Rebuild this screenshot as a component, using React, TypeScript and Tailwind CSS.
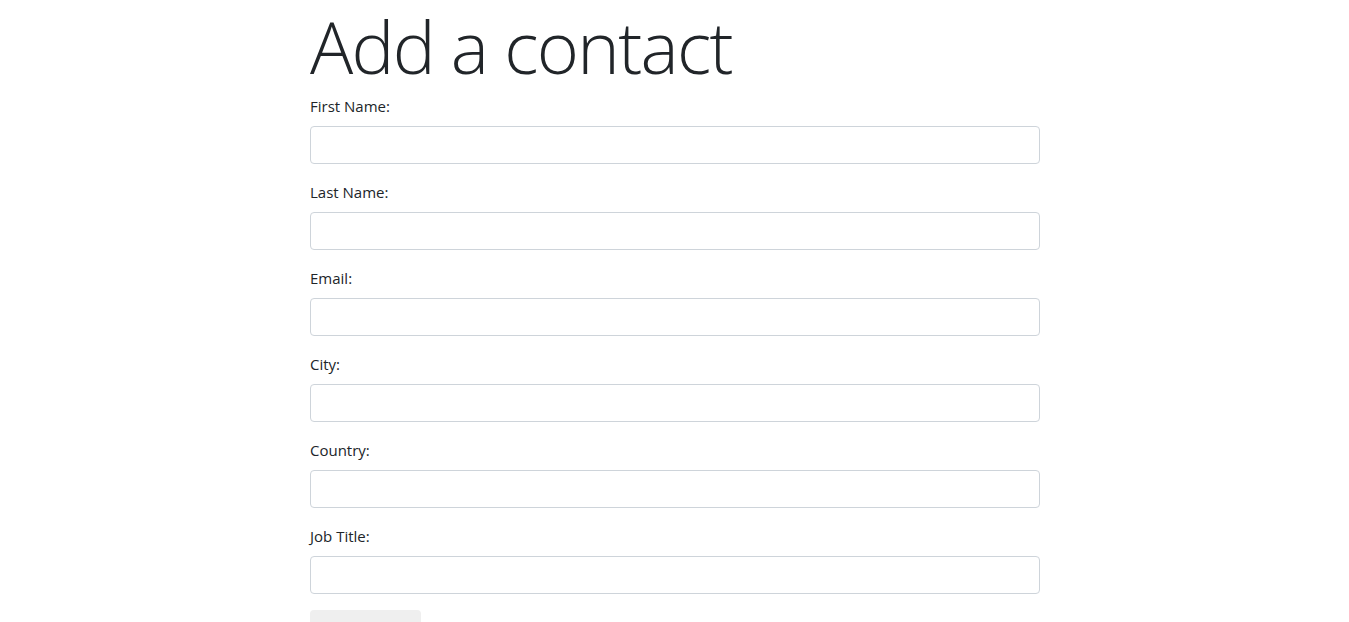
const fields = ["First Name:", "Last Name:", "Email:", "City:", "Country:", "Job Title:"];

export default function App() {
  return (
    <div className="min-h-screen bg-white text-[#212529]">
      <div className="ml-[310px] w-[730px] font-['Open_Sans',sans-serif]">
        <h1 className="text-[72px] leading-[86px] font-light tracking-[-1.7px] pt-[3px] mb-[5px]">Add a contact</h1>
        <form>
          {fields.map((label) => (
            <div key={label} className="mb-4">
              <label className="block text-[15px] leading-6 mb-2">{label}</label>
              <input
                type="text"
                className="block w-full h-[38px] px-3 border border-[#ced4da] rounded bg-white outline-none"
              />
            </div>
          ))}
          <button type="button" className="w-[111px] h-[38px] rounded bg-[#efefef]"></button>
        </form>
      </div>
    </div>
  );
}
